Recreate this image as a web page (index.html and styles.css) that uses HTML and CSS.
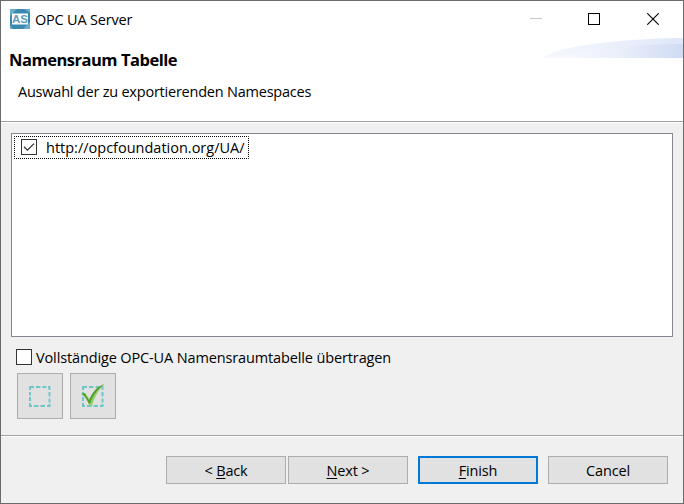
FILE: index.html
```html
<!DOCTYPE html>
<html lang="de">
<head>
<meta charset="utf-8">
<title>OPC UA Server</title>
<link rel="stylesheet" href="styles.css">
</head>
<body>
<div class="window">
  <div class="titlebar">
    <svg class="app-icon" width="20" height="20" viewBox="0 0 20 20">
      <rect width="20" height="20" fill="#3988b0"/>
      <path d="M0 0h7L0 7zM20 20h-7l7-7zM14 0h6v4zM0 20v-4l3 4z" fill="#69abc9"/>
      <rect x="2" y="4.5" width="16" height="11" fill="#fff"/>
      <text x="2" y="14" textLength="16" lengthAdjust="spacingAndGlyphs" class="app-icon-text">AS</text>
    </svg>
    <span class="window-title">OPC UA Server</span>
    <div class="controls">
      <svg width="12" height="12" viewBox="0 0 12 12"><path d="M0 5.5h12" stroke="#c8c8c8"/></svg>
      <svg width="12" height="12" viewBox="0 0 12 12"><rect x=".5" y=".5" width="11" height="11" fill="none" stroke="#000"/></svg>
      <svg width="12" height="12" viewBox="0 0 12 12"><path d="M.3.3l11.4 11.4M11.7.3L.3 11.7" stroke="#000" stroke-width="1.1"/></svg>
    </div>
  </div>
  <header class="header">
    <svg class="swoosh" width="140" height="20" viewBox="0 0 140 20">
      <defs>
        <linearGradient id="outer"><stop offset="0" stop-color="#f6f8fd"/><stop offset="1" stop-color="#dfe7f8"/></linearGradient>
        <linearGradient id="inner"><stop offset="0" stop-color="#fafbfe"/><stop offset=".5" stop-color="#ebeffa"/><stop offset="1" stop-color="#d0dbf4"/></linearGradient>
      </defs>
      <path d="M0 20C8 11 60 1 140 0v20z" fill="url(#outer)"/>
      <path d="M8 20C45 12 90 6 140 6v14z" fill="url(#inner)"/>
    </svg>
    <h1>Namensraum Tabelle</h1>
    <p>Auswahl der zu exportierenden Namespaces</p>
  </header>
  <main class="content">
    <div class="list">
      <div class="row">
        <svg class="focus" width="235" height="23"><rect x=".5" y=".5" width="234" height="22" fill="none" stroke="#000" stroke-dasharray="1 1" stroke-dashoffset=".5"/></svg>
        <span class="box"><svg width="14" height="14" viewBox="0 0 14 14"><path d="M2 6.8l3.4 3.4L12 3.6" fill="none" stroke="#333" stroke-width="1.3"/></svg></span>
        <span class="url">http://opcfoundation.org/UA/</span>
      </div>
    </div>
    <label class="option"><span class="box"></span><span class="option-text">Vollständige OPC-UA Namensraumtabelle übertragen</span></label>
    <div class="tools">
      <button class="tool"><svg width="24" height="24" viewBox="0 0 24 24"><path class="dash" d="M2 6V3h4M8 3h4.500M14.500 3h4M20 3h1.500v3M21.500 8v4.500M21.500 14.500v4M21.500 20v2H19M17 22h-4.500M10.500 22H6M4 22H2v-3M2 17v-4M2 11.500V8"/></svg></button>
      <button class="tool"><svg width="24" height="24" viewBox="0 0 24 24">
        <path class="dash" d="M2 6V3h4M8 3h4.500M14.500 3h4M20 3h1.500v3M21.500 8v4.500M21.500 14.500v4M21.500 20v2H19M17 22h-4.500M10.500 22H6M4 22H2v-3M2 17v-4M2 11.500V8"/>
        <path d="M.3 9.500L4 9l4.500 6C12 8 16 3 23.500 0c-6 6-10 13-12.500 22H8.500C6.500 17 4 13 .3 9.500z" fill="#96cf68"/>
        <path d="M.5 9.500L3.800 9.300l4.200 7.200C11 9 16 2.500 23 .3 16 6 12 11 9.500 18.500L8 20C6 15 4 12 .5 9.500z" fill="#4f9c2d"/>
      </svg></button>
    </div>
  </main>
  <footer class="footer">
    <button class="btn"><span>&lt; <u>B</u>ack</span></button>
    <button class="btn next"><span><u>N</u>ext &gt;</span></button>
    <button class="btn primary"><span><u>F</u>inish</span></button>
    <button class="btn"><span>Cancel</span></button>
  </footer>
</div>
</body>
</html>
```
FILE: styles.css
```css
* { box-sizing: border-box; }
body {
  margin: 0;
  font: 14.5px/20px "Open Sans", "Noto Sans", sans-serif;
  color: #000;
}
.window {
  width: 684px;
  height: 504px;
  border: 1px solid #6b6b6d;
  background: #f0f0f0;
  display: flex;
  flex-direction: column;
  overflow: hidden;
  white-space: nowrap;
}
.titlebar {
  height: 36px;
  background: #fff;
  display: flex;
  align-items: center;
  padding-left: 9px;
}
.app-icon { margin-right: 5px; }
.app-icon-text {
  font: bold 11px "Liberation Sans", sans-serif;
  fill: #5f9dba;
}
.window-title { letter-spacing: -.2px; padding-top: 1px; }
.controls {
  margin-left: auto;
  margin-right: 24px;
  display: flex;
  gap: 47px;
}
.controls svg { display: block; }
.controls svg:first-child { margin-right: -1px; }
.header {
  position: relative;
  height: 86px;
  background: #fff;
  border-bottom: 1px solid #fff;
  box-shadow: inset 0 -1px #a0a0a0;
  padding: 13px 0 0 8px;
}
.swoosh { position: absolute; right: 0; top: 1px; }
h1 {
  margin: 0;
  font-size: 16.5px;
  line-height: 20px;
  font-weight: 700;
  letter-spacing: -.48px;
}
.header p { margin: 12px 0 0 9px; letter-spacing: -.22px; }
.content { flex: 1; padding: 10px 10px 0; }
.list {
  height: 204px;
  border: 1px solid #828790;
  background: #fff;
  padding: 2px;
}
.row {
  position: relative;
  width: 235px;
  height: 23px;
  display: flex;
  align-items: center;
  padding-left: 7px;
}
.focus { position: absolute; left: 0; top: 0; }
.box {
  width: 16px;
  height: 16px;
  flex: none;
  border: 1px solid #333;
  background: #fff;
}
.row .box { margin-bottom: 1px; }
.box svg { display: block; }
.url { margin-left: 9px; }
.option {
  display: flex;
  align-items: center;
  height: 20px;
  margin: 10px 0 0 5px;
}
.option-text { margin-left: 4px; padding-top: 1px; letter-spacing: -.13px; }
.tools { display: flex; gap: 7px; margin: 6px 0 0 6px; }
.tool {
  width: 46px;
  height: 46px;
  padding: 0;
  border: 1px solid #adadad;
  background: #e1e1e1;
  display: flex;
  align-items: center;
  justify-content: center;
}
.tool svg { overflow: visible; }
.dash { fill: none; stroke: #70c5c8; stroke-width: 1.9; }
.footer {
  height: 68px;
  border-top: 1px solid #a0a0a0;
  box-shadow: inset 0 1px #fff;
  padding: 20px 15px 0 0;
  display: flex;
  justify-content: flex-end;
  gap: 10px;
}
.btn {
  width: 120px;
  height: 28px;
  padding: 2px 0 0;
  border: 1px solid #adadad;
  background: #e1e1e1;
  font: inherit;
  color: #000;
  letter-spacing: -.15px;
}
.next { margin-left: -8px; }
.primary { border: 2px solid #0078d7; }
u { text-decoration-thickness: 1px; text-underline-offset: 2px; }
```
